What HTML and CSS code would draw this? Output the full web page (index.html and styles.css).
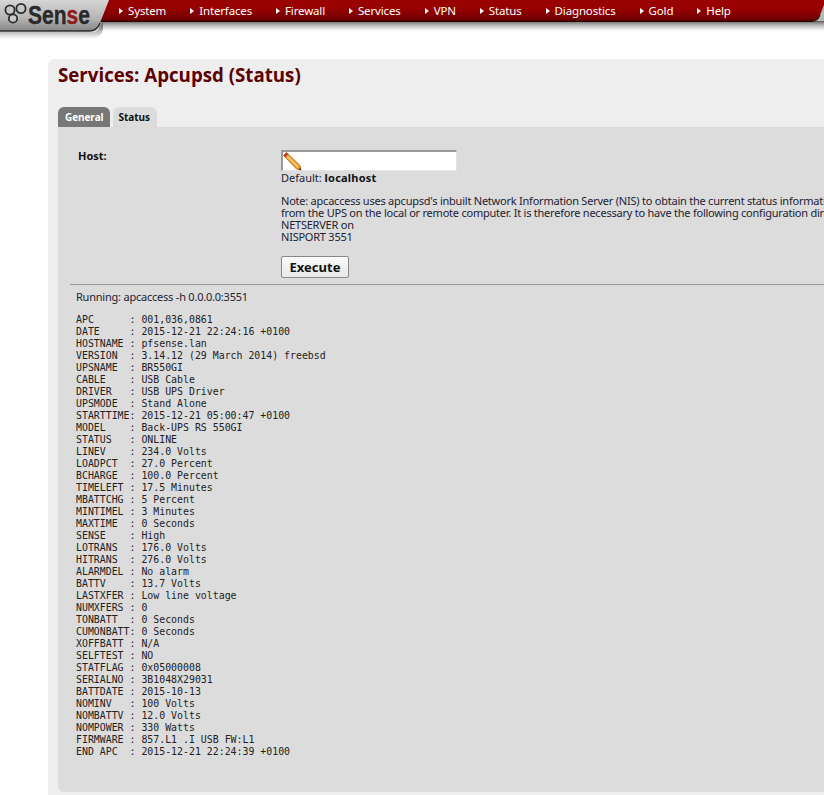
FILE: index.html
```html
<!DOCTYPE html>
<html lang="en">
<head>
<meta charset="utf-8">
<title>Services: Apcupsd (Status)</title>
<link rel="stylesheet" href="styles.css">
</head>
<body>
<header class="topbar">
  <svg class="logo" width="112" height="40" viewBox="0 0 112 40" aria-label="pfSense">
    <defs>
      <linearGradient id="lg" x1="0" y1="0" x2="0" y2="1">
        <stop offset="0" stop-color="#d6d6d6"/>
        <stop offset="0.6" stop-color="#b4b4b4"/>
        <stop offset="1" stop-color="#858585"/>
      </linearGradient>
      <linearGradient id="sh" x1="0" y1="0" x2="0" y2="1">
        <stop offset="0" stop-color="#666"/>
        <stop offset="1" stop-color="#666" stop-opacity="0"/>
      </linearGradient>
    </defs>
    <path d="M0 32 H92 Q98 32 100 26 L103 22 V30 Q100 39 90 39 H0 Z" fill="url(#sh)"/>
    <path d="M0 0 H109 L100 23 Q97 31 90 31 H0 Z" fill="url(#lg)"/>
    <path d="M0 31 H90 Q97 31 100 23" fill="none" stroke="#2a2a2a" stroke-width="1.4"/>
    <g fill="#c8c8c8" stroke="#2c2c2c" stroke-width="1.8">
      <circle cx="10" cy="10" r="4.6"/><circle cx="21" cy="8.5" r="4.6"/><circle cx="13" cy="18.5" r="4.2"/>
    </g>
    <text class="logo-text" x="28" y="23.5" textLength="62" lengthAdjust="spacingAndGlyphs">Sen<tspan class="logo-red">s</tspan>e</text>
  </svg>
  <nav class="menu">
    <a class="item">System</a>
    <a class="item">Interfaces</a>
    <a class="item">Firewall</a>
    <a class="item">Services</a>
    <a class="item">VPN</a>
    <a class="item">Status</a>
    <a class="item">Diagnostics</a>
    <a class="item">Gold</a>
    <a class="item">Help</a>
  </nav>
  <svg class="corner" width="12" height="23" viewBox="0 0 12 23" aria-hidden="true">
    <path d="M12 5 L8 15 Q6 21 0 21.5 H12 Z" fill="#b8b8b8"/>
    <path d="M8 15 Q6 21 0 21.5" fill="none" stroke="#2a2a2a" stroke-width="1.2"/>
  </svg>
</header>

<main class="panel">
  <h1 class="title">Services: Apcupsd (Status)</h1>
  <div class="tabs">
    <span class="tab tab-off">General</span>
    <span class="tab tab-on">Status</span>
  </div>
  <section class="content">
    <div class="form">
      <label class="host-label">Host:</label>
      <div class="field">
        <div class="input">
          <svg width="19" height="19" viewBox="0 0 19 19">
            <path d="M3.5 0.5 L17 13.5 L18 18 L13.5 17 L0.5 3.5 Z" fill="#eea02e" stroke="#a8661a" stroke-width="0.8"/>
            <path d="M3.5 0.5 L0.5 3.5 L2.5 5.5 L5.5 2.5 Z" fill="#cf3a26"/>
            <path d="M4 4 L15 15" stroke="#fbd27c" stroke-width="1.4"/>
            <path d="M15.5 17.4 L18 18 L17.4 15.5 Z" fill="#40352a"/>
          </svg>
        </div>
        <p class="default">Default: <b>localhost</b></p>
        <p class="note">Note: apcaccess uses apcupsd's inbuilt Network Information Server (NIS) to obtain the current status information<br>from the UPS on the local or remote computer. It is therefore necessary to have the following configuration directives<br>NETSERVER on<br>NISPORT 3551</p>
        <button class="exec" type="button">Execute</button>
      </div>
    </div>
    <div class="result">
      <p class="running">Running: apcaccess -h 0.0.0.0:3551</p>
<pre class="output">APC      : 001,036,0861
DATE     : 2015-12-21 22:24:16 +0100
HOSTNAME : pfsense.lan
VERSION  : 3.14.12 (29 March 2014) freebsd
UPSNAME  : BR550GI
CABLE    : USB Cable
DRIVER   : USB UPS Driver
UPSMODE  : Stand Alone
STARTTIME: 2015-12-21 05:00:47 +0100
MODEL    : Back-UPS RS 550GI
STATUS   : ONLINE
LINEV    : 234.0 Volts
LOADPCT  : 27.0 Percent
BCHARGE  : 100.0 Percent
TIMELEFT : 17.5 Minutes
MBATTCHG : 5 Percent
MINTIMEL : 3 Minutes
MAXTIME  : 0 Seconds
SENSE    : High
LOTRANS  : 176.0 Volts
HITRANS  : 276.0 Volts
ALARMDEL : No alarm
BATTV    : 13.7 Volts
LASTXFER : Low line voltage
NUMXFERS : 0
TONBATT  : 0 Seconds
CUMONBATT: 0 Seconds
XOFFBATT : N/A
SELFTEST : NO
STATFLAG : 0x05000008
SERIALNO : 3B1048X29031
BATTDATE : 2015-10-13
NOMINV   : 100 Volts
NOMBATTV : 12.0 Volts
NOMPOWER : 330 Watts
FIRMWARE : 857.L1 .I USB FW:L1
END APC  : 2015-12-21 22:24:39 +0100</pre>
    </div>
  </section>
</main>
</body>
</html>
```
FILE: styles.css
```css
html, body { margin: 0; padding: 0; }
html { overflow: hidden; }
body {
  width: 824px;
  height: 795px;
  overflow: hidden;
  background: #fff;
  color: #222;
  font: 11px/12px "Noto Sans", sans-serif;
}
.topbar {
  position: relative;
  height: 59px;
  background: linear-gradient(#7c7c7c 0, #c4c4c4 4px, #fff 9px) 0 22px / 100% 9px no-repeat;
}
.logo { position: absolute; left: 0; top: 0; z-index: 2; }
.logo-text {
  font: bold 26px "Liberation Sans", sans-serif;
  fill: #2a2a2a;
  stroke: #2a2a2a;
  stroke-width: 0.4;
}
.logo-red { fill: #8f1a1a; stroke: #8f1a1a; }
.corner { position: absolute; right: 0; top: 0; }
.menu {
  display: flex;
  height: 22px;
  padding-left: 119px;
  box-sizing: border-box;
  background: linear-gradient(#990000 0, #990000 8px, #6e0000 20px, #2e0000 21px, #2e0000 22px);
}
.item {
  position: relative;
  padding-left: 9px;
  margin-right: 24px;
  color: #fff;
  font: 11.5px/21px "Noto Sans", sans-serif;
  letter-spacing: -0.15px;
  white-space: nowrap;
}
.item::before {
  content: "";
  position: absolute;
  left: 0;
  top: 8px;
  border-left: 4px solid #fff;
  border-top: 3px solid transparent;
  border-bottom: 3px solid transparent;
}
.panel {
  margin-left: 48px;
  width: 900px;
  height: 736px;
  box-sizing: border-box;
  padding: 0 0 0 10px;
  background: #eeeeee;
  border-radius: 6px 0 0 0;
}
.title {
  margin: 0;
  padding-top: 6px;
  height: 40px;
  box-sizing: border-box;
  color: #5c0000;
  font: bold 18.7px/20px "Open Sans", sans-serif;
}
.tabs { display: flex; gap: 3px; margin-top: 8px; height: 20px; }
.tab {
  border-radius: 6px 6px 0 0;
  font: bold 10px/21px "Open Sans", sans-serif;
  letter-spacing: -0.1px;
}
.tab-off { background: #777; color: #fff; padding: 0 6px 0 7px; }
.tab-on { background: #dcdcdc; color: #111; padding: 0 7px 0 6px; }
.content {
  height: 665px;
  background: #dcdcdc;
  border-radius: 0 0 0 6px;
  box-sizing: border-box;
  padding-top: 23px;
}
.form {
  display: flex;
  padding: 0 0 6px 8px;
  border-bottom: 1px solid #999;
  margin-left: 12px;
}
.host-label { width: 203px; font-weight: bold; color: #111; flex: none; }
.field { letter-spacing: -0.23px; color: #223; }
.input {
  box-sizing: border-box;
  width: 176px;
  height: 21px;
  background: #fff;
  border: 2px solid #999;
  border-right: 1px solid #e4e4e4;
  border-bottom: 1px solid #e4e4e4;
}
.input svg { display: block; }
.default { margin: 1px 0 0; height: 12px; letter-spacing: 0; }
.default b { color: #111; letter-spacing: 0.2px; }
.note { margin: 11px 0 0; white-space: nowrap; }
.exec {
  display: block;
  margin: 13px 0 0;
  width: 68px;
  height: 22px;
  padding: 0;
  background: linear-gradient(#fafafa, #e8e8e8);
  border: 1px solid #888;
  border-radius: 2px;
  color: #111;
  font: bold 13px/18px "Noto Sans", sans-serif;
  letter-spacing: 0;
}
.result { padding-left: 18px; }
.running { margin: 0; padding-top: 6px; letter-spacing: -0.22px; color: #223; }
.output {
  margin: 11px 0 0;
  font: 9.9px/12px "DejaVu Sans Mono", monospace;
  color: #222;
}
```
